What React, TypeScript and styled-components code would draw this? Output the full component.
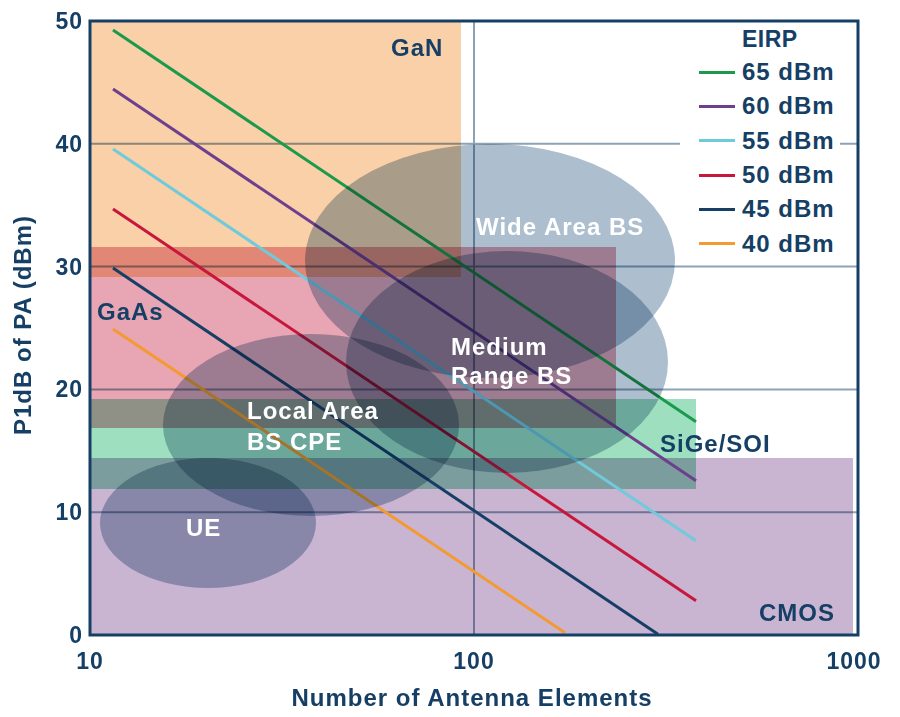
import { FC } from "react"
import styled, { createGlobalStyle } from "styled-components"

const NAVY = "#163f66"
const FONT = `"Liberation Sans", Arial, Helvetica, sans-serif`

// plot geometry (page pixels)
const X0 = 90
const X1 = 858
const Y0 = 635
const Y1 = 21
const DECADE = (X1 - X0) / 2
const PER_DB = (Y0 - Y1) / 50

const px = (n: number) => X0 + Math.log10(n / 10) * DECADE
const py = (v: number) => Y0 - v * PER_DB

type Region = { x: number; y: number; w: number; h: number; fill: string }
const regions: Region[] = [
  { x: 90, y: 21, w: 371, h: 256, fill: "#f9d0a8" },
  { x: 90, y: 247, w: 526, h: 181, fill: "#e8a5b3" },
  { x: 90, y: 399, w: 606, h: 90, fill: "#9ddfbf" },
  { x: 90, y: 458, w: 763, h: 177, fill: "#c9b4d2" },
]

type Blob = { cx: number; cy: number; rx: number; ry: number }
const blobs: Blob[] = [
  { cx: 490, cy: 261, rx: 185, ry: 117 },
  { cx: 507, cy: 362, rx: 161, ry: 111 },
  { cx: 311, cy: 425, rx: 148, ry: 91 },
  { cx: 208, cy: 523, rx: 108, ry: 65 },
]

type Series = { label: string; color: string; y: number; end: number }
const series: Series[] = [
  { label: "65 dBm", color: "#1a9a4a", y: 30, end: 696 },
  { label: "60 dBm", color: "#6d3f8d", y: 89, end: 696 },
  { label: "55 dBm", color: "#6fcadb", y: 149, end: 696 },
  { label: "50 dBm", color: "#c8173c", y: 209, end: 696 },
  { label: "45 dBm", color: NAVY, y: 268, end: 658 },
  { label: "40 dBm", color: "#f39a32", y: 329, end: 565 },
]
const SLOPE = 0.672
const LINE_X = 113

type Note = { x: number; y: number; text: string; light?: boolean }
const notes: Note[] = [
  { x: 391, y: 47, text: "GaN" },
  { x: 97, y: 311, text: "GaAs" },
  { x: 476, y: 226, text: "Wide Area BS", light: true },
  { x: 451, y: 346, text: "Medium", light: true },
  { x: 451, y: 375, text: "Range BS", light: true },
  { x: 247, y: 410, text: "Local Area", light: true },
  { x: 247, y: 441, text: "BS CPE", light: true },
  { x: 186, y: 527, text: "UE", light: true },
  { x: 660, y: 443, text: "SiGe/SOI" },
  { x: 759, y: 612, text: "CMOS" },
]

const GlobalStyle = createGlobalStyle`
  html, body {
    margin: 0;
    padding: 0;
    background: #ffffff;
  }
  body {
    font-family: ${FONT};
    color: ${NAVY};
  }
`

const Figure = styled.div`
  width: 900px;
  height: 717px;
  display: grid;
  grid-template-columns: 44px 856px;
  grid-template-rows: 680px 37px;
  font-family: ${FONT};
  font-weight: 700;
  color: ${NAVY};
`

const YTitle = styled.div`
  grid-column: 1;
  grid-row: 1;
  display: flex;
  align-items: center;
  justify-content: center;
  padding-top: 30px;
  padding-right: 2px;
  font-size: 24px;
  letter-spacing: 1px;
  writing-mode: vertical-rl;
  transform: rotate(180deg);
  white-space: nowrap;
`

const ChartArea = styled.div`
  grid-column: 2;
  grid-row: 1;
  position: relative;
`

const Plot = styled.svg`
  display: block;
  width: 856px;
  height: 680px;
  font-family: ${FONT};
  font-weight: 700;
  letter-spacing: 1px;

  .mul {
    mix-blend-mode: multiply;
  }
`

const XTitle = styled.div`
  grid-column: 2;
  grid-row: 2;
  text-align: center;
  padding-top: 4px;
  font-size: 24px;
  letter-spacing: 1px;
  line-height: 28px;
`

const Legend = styled.div`
  position: absolute;
  left: ${680 - 44}px;
  top: 23px;
  width: 160px;
  background: #ffffff;
  padding-left: 19px;
  box-sizing: border-box;
`

const LegendHead = styled.div`
  height: 32px;
  line-height: 32px;
  padding-left: 43px;
  font-size: 23px;
  letter-spacing: 0.5px;
`

const LegendRow = styled.div`
  display: flex;
  align-items: center;
  gap: 7px;
  height: 34.3px;
  font-size: 24px;
  letter-spacing: 1px;
`

const Swatch = styled.span<{ $color: string }>`
  width: 36px;
  height: 3px;
  flex: none;
  background: ${(p) => p.$color};
`

const Chart: FC = () => (
  <Plot viewBox="44 0 856 680" xmlns="http://www.w3.org/2000/svg">
    <g>
      {regions.map((r, i) => (
        <rect key={i} className="mul" x={r.x} y={r.y} width={r.w} height={r.h} fill={r.fill} />
      ))}
    </g>
    <g stroke="#8ea2b6" strokeWidth={2} className="mul">
      {[10, 20, 30, 40].map((v) => (
        <line key={v} x1={X0} x2={X1} y1={py(v)} y2={py(v)} />
      ))}
      <line x1={px(100)} x2={px(100)} y1={Y1} y2={Y0} />
    </g>
    <g strokeWidth={3}>
      {series.map((s) => (
        <line
          key={s.label}
          x1={LINE_X}
          y1={s.y}
          x2={s.end}
          y2={s.y + (s.end - LINE_X) * SLOPE}
          stroke={s.color}
        />
      ))}
    </g>
    <g fill="#adbfcf">
      {blobs.map((b, i) => (
        <ellipse key={i} className="mul" cx={b.cx} cy={b.cy} rx={b.rx} ry={b.ry} />
      ))}
    </g>
    <polyline
      points={`${X0},${Y1} ${X1},${Y1} ${X1},${Y0} ${X0},${Y0} ${X0},${Y1 - 1.5}`}
      fill="none"
      stroke={NAVY}
      strokeWidth={3}
    />
    <g fill={NAVY} fontSize={23} textAnchor="end" dominantBaseline="central">
      {[0, 10, 20, 30, 40, 50].map((v) => (
        <text key={v} x={83} y={py(v)}>
          {v}
        </text>
      ))}
    </g>
    <g fill={NAVY} fontSize={23} textAnchor="middle" dominantBaseline="central">
      {[10, 100, 1000].map((n) => (
        <text key={n} x={px(n) + (n === 1000 ? -4 : 0)} y={661}>
          {n}
        </text>
      ))}
    </g>
    <g fontSize={24} dominantBaseline="central">
      {notes.map((n) => (
        <text key={n.text} x={n.x} y={n.y} fill={n.light ? "#ffffff" : NAVY}>
          {n.text}
        </text>
      ))}
    </g>
  </Plot>
)

const App: FC = () => (
  <>
    <GlobalStyle />
    <Figure>
      <YTitle>P1dB of PA (dBm)</YTitle>
      <ChartArea>
        <Chart />
        <Legend>
          <LegendHead>EIRP</LegendHead>
          {series.map((s) => (
            <LegendRow key={s.label}>
              <Swatch $color={s.color} />
              {s.label}
            </LegendRow>
          ))}
        </Legend>
      </ChartArea>
      <XTitle>Number of Antenna Elements</XTitle>
    </Figure>
  </>
)

export default App
